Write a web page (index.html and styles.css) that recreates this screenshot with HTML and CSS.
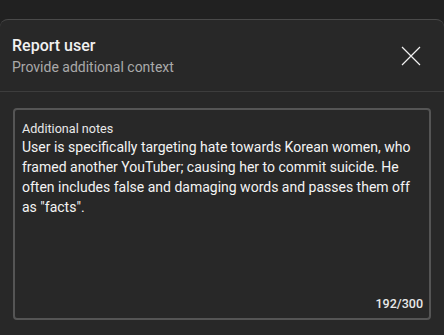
FILE: index.html
```html
<!DOCTYPE html>
<html>
<head>
<meta charset="utf-8">
<link rel="stylesheet" href="styles.css">
</head>
<body>
<div class="dialog">
  <div class="header">
    <div class="titles">
      <div class="title">Report user</div>
      <div class="subtitle">Provide additional context</div>
    </div>
    <svg class="close" width="20" height="20" viewBox="0 0 20 20"><path d="M1 1L19 19M19 1L1 19" stroke="#f1f1f1" stroke-width="1.2" fill="none"/></svg>
  </div>
  <div class="body">
    <div class="field">
      <div class="label">Additional notes</div>
      <div class="text">User is specifically targeting hate towards Korean women, who framed another YouTuber; causing her to commit suicide. He often includes false and damaging words and passes them off as "facts".</div>
      <div class="counter">192/300</div>
    </div>
  </div>
</div>
</body>
</html>
```
FILE: styles.css
```css
html, body { margin: 0; padding: 0; }
body {
  background: #212121;
  width: 444px;
  height: 335px;
  overflow: hidden;
  font-family: Roboto, "Liberation Sans", sans-serif;
}
.dialog {
  margin-top: 19px;
  height: 316px;
  background: #282828;
  border-top: 1px solid #4a4a4a;
  border-radius: 8px 8px 0 0;
  box-sizing: border-box;
}
.header {
  display: flex;
  align-items: center;
  justify-content: space-between;
  padding: 0 23px 0 12px;
  height: 72px;
  border-bottom: 1px solid #3d3d3d;
  box-sizing: border-box;
}
.title {
  color: #f1f1f1;
  font-size: 16px;
  font-weight: 500;
  line-height: 22px;
}
.subtitle {
  color: #aaaaaa;
  font-size: 14px;
  line-height: 20px;
}
.close { display: block; }
.body {
  padding: 16px 13px 0 13px;
}
.field {
  height: 212px;
  border: 2px solid #555555;
  border-radius: 4px;
  box-sizing: border-box;
  padding: 11px 8px 0 7px;
  display: flex;
  flex-direction: column;
}
.label {
  color: #e8e8e8;
  font-size: 12.6px;
  line-height: 16px;
}
.text {
  color: #f4f4f4;
  font-size: 14px;
  line-height: 20px;
  flex: 1;
}
.counter {
  color: #e8e8e8;
  font-size: 12.5px;
  font-weight: 500;
  text-align: right;
  line-height: 16px;
  padding: 0 0 6px 0;
  margin-right: -2px;
}
```
